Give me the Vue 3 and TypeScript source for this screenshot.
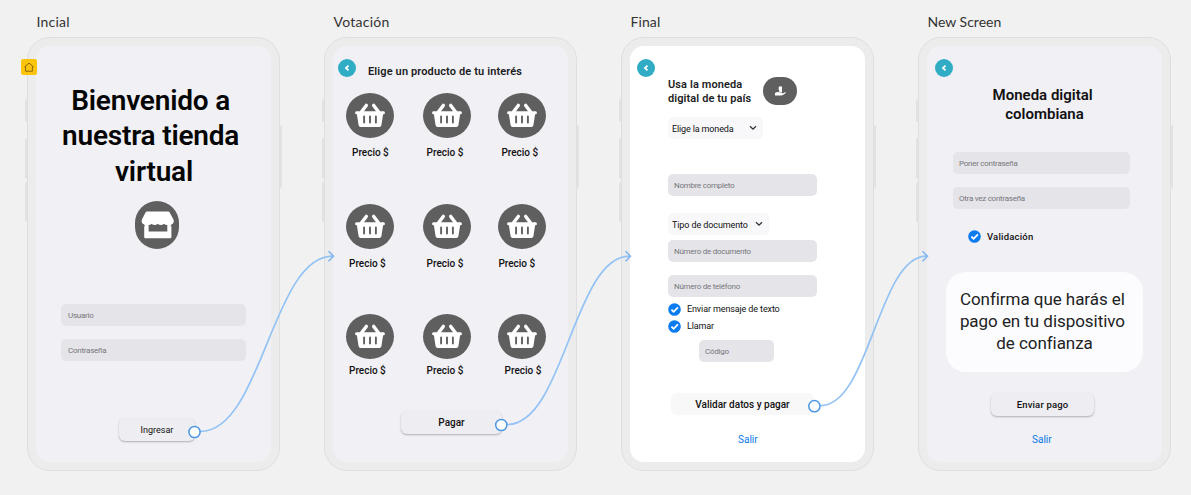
<script setup lang="ts">
interface Product {
  id: number
  shift: number
}
interface Wire {
  x: number
  y: number
  endX: number
}

const rows: Product[][] = [
  [{ id: 1, shift: 6 }, { id: 2, shift: 3.6 }, { id: 3, shift: 3.4 }],
  [{ id: 4, shift: 3 }, { id: 5, shift: 3.6 }, { id: 6, shift: 0.4 }],
  [{ id: 7, shift: 3 }, { id: 8, shift: 3.6 }, { id: 9, shift: 6.6 }],
]

const wires: Wire[] = [
  { x: 194.5, y: 432, endX: 333.5 },
  { x: 501.3, y: 425, endX: 630.5 },
  { x: 814.4, y: 406.2, endX: 927.5 },
]

function wirePath(w: Wire): string {
  const start = w.x + 6
  const d = (w.endX - start) * 0.46
  return `M${start} ${w.y - 0.5}C${start + d} ${w.y - 0.5} ${w.endX - d} 256.2 ${w.endX - 1} 256.2`
}
</script>

<template>
  <main class="canvas">
    <section class="frame">
      <div class="label l1">Incial</div>
      <div class="phone">
        <i class="key k1"></i><i class="key k2"></i><i class="key k3"></i><i class="key k4"></i>
        <span class="home">
          <svg width="16" height="16" viewBox="0 0 16 16"><path d="M3.4 8 8 4.1 12.6 8M4.6 7.4V12.2H11.4V7.4" fill="none" stroke="#7a5c08" stroke-width=".9" stroke-linejoin="round" /></svg>
        </span>
        <div class="screen s1">
          <h1>Bienvenido a&nbsp;<br />nuestra tienda&nbsp;<br />virtual</h1>
          <span class="shop">
            <svg width="44" height="48" viewBox="0 0 44 48">
              <path fill="#fff" d="M12 10.500h21.200q1 0 1.500.9L38.600 18.800q.8 3.800-2.200 4.700V36q0 1.200-1.200 1.200H10.400Q9.200 37.200 9.200 36V23.500q-3.200-.9-2.400-4.700L10.500 11.400q.5-.9 1.500-.9z" />
              <path fill="#5f5f60" d="M7 24.200h2.900v1H7zM35.700 24.200h2.900v1h-2.900zM13.600 23.900q2 0 3-1.200 1.200 1.200 3.100 1.200t3-1.200q1.200 1.200 3.100 1.200t3.100-1.200q1.200 1.200 3.400 1.200V30.400H13.600z" />
            </svg>
          </span>
          <div class="input user">Usuario</div>
          <div class="input pass">Contraseña</div>
          <div class="button enter">Ingresar</div>
        </div>
      </div>
    </section>

    <section class="frame">
      <div class="label l2">Votación</div>
      <div class="phone">
        <i class="key k1"></i><i class="key k2"></i><i class="key k3"></i><i class="key k4"></i>
        <div class="screen s2">
          <header>
            <span class="back"><svg width="18" height="18" viewBox="0 0 18 18"><path d="M10.500 6.700 8 9.100l2.500 2.300" /></svg></span>
            <h2>Elige un producto de tu interés</h2>
          </header>
          <div v-for="(row, i) in rows" :key="i" class="products" :class="'row' + i">
            <div v-for="p in row" :key="p.id" class="product">
              <span class="basket">
                <svg width="48" height="45" viewBox="0 0 48 45">
                  <path d="M15.700 18.500 20.300 12.400M32.300 18.500 27.700 12.400" stroke="#fff" stroke-width="3.400" stroke-linecap="round" />
                  <path fill="#fff" d="M10.300 18.300h27.400q1.200 0 1.200 1.500t-1.200 1.500h-.6l-1.700 11q-.4 1.600-2 1.600H14.600q-1.600 0-2-1.600l-1.700-11h-.6q-1.200 0-1.200-1.500t1.200-1.500z" />
                  <path d="M18.100 23.500v6M24 23.500v6M29.900 23.500v6" stroke="#5f5f60" stroke-width="1.900" stroke-linecap="round" />
                </svg>
              </span>
              <span class="price" :style="{ marginLeft: p.shift + 'px' }">Precio $</span>
            </div>
          </div>
          <div class="button pay">Pagar</div>
        </div>
      </div>
    </section>

    <section class="frame">
      <div class="label l3">Final</div>
      <div class="phone">
        <i class="key k1"></i><i class="key k2"></i><i class="key k3"></i><i class="key k4"></i>
        <div class="screen s3">
          <span class="back"><svg width="18" height="18" viewBox="0 0 18 18"><path d="M10.500 6.700 8 9.100l2.500 2.300" /></svg></span>
          <div class="intro">
            <h2>Usa la moneda<br />digital de tu país</h2>
            <span class="coin">
              <svg width="34" height="28" viewBox="0 0 34 28" fill="#fff">
                <path d="M15.700 9.800q1.600-1.300 3.300 0v5.400h-3.300l.9-1.200-.9-1.200z" />
                <path d="M12 16q2.200-1.300 4.200-.7l2.300.4q1.500.2.5 1l3.100-1.400q1.200-.2.600.8-1.700 1.900-4 2.400H12z" />
              </svg>
            </span>
          </div>
          <div class="select coin-select"><span>Elige la moneda</span><svg width="8" height="6" viewBox="0 0 8 6"><path d="M1 1.300 4 4.200 7 1.300" /></svg></div>
          <div class="input name">Nombre completo</div>
          <div class="select doc-select"><span>Tipo de documento</span><svg width="8" height="6" viewBox="0 0 8 6"><path d="M1 1.300 4 4.200 7 1.300" /></svg></div>
          <div class="input doc">Número de documento</div>
          <div class="input phone-no">Número de teléfono</div>
          <div class="check sms"><svg width="13" height="13" viewBox="0 0 13 13"><circle cx="6.500" cy="6.500" r="6.300" /><path d="m3.400 6.600 2.200 2.200 4.300-4.500" /></svg><span>Enviar mensaje de texto</span></div>
          <div class="check call"><svg width="13" height="13" viewBox="0 0 13 13"><circle cx="6.500" cy="6.500" r="6.300" /><path d="m3.400 6.600 2.200 2.200 4.300-4.500" /></svg><span>Llamar</span></div>
          <div class="input code">Código</div>
          <div class="button validate">Validar datos y pagar</div>
          <a class="exit">Salir</a>
        </div>
      </div>
    </section>

    <section class="frame">
      <div class="label l4">New Screen</div>
      <div class="phone">
        <i class="key k1"></i><i class="key k2"></i><i class="key k3"></i><i class="key k4"></i>
        <div class="screen s4">
          <span class="back"><svg width="18" height="18" viewBox="0 0 18 18"><path d="M10.500 6.700 8 9.100l2.500 2.300" /></svg></span>
          <h3>Moneda digital&nbsp;<br />colombiana</h3>
          <div class="input first">Poner contraseña</div>
          <div class="input again">Otra vez contraseña</div>
          <div class="check valid"><svg width="13" height="13" viewBox="0 0 13 13"><circle cx="6.500" cy="6.500" r="6.300" /><path d="m3.400 6.600 2.200 2.200 4.300-4.500" /></svg><span>Validación</span></div>
          <p class="notice">Confirma que harás el&nbsp;<br />pago en tu dispositivo&nbsp;<br />de confianza</p>
          <div class="button send">Enviar pago</div>
          <a class="exit">Salir</a>
        </div>
      </div>
    </section>

    <svg class="wires" width="1191" height="495" viewBox="0 0 1191 495" fill="none">
      <g v-for="w in wires" :key="w.x">
        <path :d="wirePath(w)" stroke="#93c3f5" stroke-width="1.700" />
        <path :d="`M${w.endX - 5} 251.200L${w.endX} 256.200L${w.endX - 5} 261.200`" stroke="#7db5ee" stroke-width="1.500" />
        <circle :cx="w.x" :cy="w.y" r="5.600" fill="#fff" stroke="#4b97e6" stroke-width="1.500" />
      </g>
    </svg>
  </main>
</template>

<style>
body {
  background: #f1f1f1;
}
</style>

<style scoped>
* {
  box-sizing: border-box;
}
.canvas {
  position: relative;
  display: flex;
  gap: 44px;
  width: 1191px;
  height: 495px;
  padding: 12px 0 0 27px;
  overflow: hidden;
  background: #f1f1f1;
  font-family: Roboto, "Liberation Sans", sans-serif;
  color: #111;
}
.frame {
  flex: 0 0 253px;
}
.label {
  height: 20px;
  margin-bottom: 5px;
  padding-left: 9.500px;
  font: 14px/20px Lato, sans-serif;
  color: #333;
  white-space: nowrap;
}
.l1 { letter-spacing: .2px; }
.l2 { letter-spacing: .25px; }
.l3 { letter-spacing: .1px; }
.phone {
  position: relative;
  height: 434px;
  padding: 8px;
  border: 1px solid #dfdfdf;
  border-radius: 23px;
  background: #ececec;
}
.key {
  position: absolute;
  left: -3px;
  width: 2px;
  background: #e2e2e2;
  border-radius: 2px 0 0 2px;
}
.k1 { top: 61px; height: 23px; }
.k2 { top: 100px; height: 41px; }
.k3 { top: 144px; height: 40px; }
.k4 { left: auto; right: -3px; top: 87px; height: 63px; }
.home {
  position: absolute;
  left: -7px;
  top: 21px;
  width: 16px;
  height: 16px;
  border-radius: 2px;
  background: #fcc40c;
}
svg {
  display: block;
}
.screen {
  display: flex;
  flex-direction: column;
  align-items: flex-start;
  height: 416px;
  border-radius: 14px;
  background: #f1f0f5;
  white-space: nowrap;
}
.s3 {
  background: #fff;
}
h1, h2, h3, p {
  margin: 0;
}
h1 {
  align-self: stretch;
  margin: 37px 0 0 1px;
  font-size: 28px;
  line-height: 35.400px;
  font-weight: 600;
  letter-spacing: -.2px;
  text-align: center;
  color: #050505;
}
.shop {
  width: 44px;
  height: 48px;
  margin: 12px 0 0 99px;
  border-radius: 22px;
  background: #5f5f60;
}
.input {
  flex: none;
  height: 22px;
  padding-left: 6px;
  border-radius: 5px;
  background: #e5e4e9;
  font-size: 8px;
  line-height: 23px;
  letter-spacing: -.26px;
  color: #77777b;
}
.user { width: 185px; margin: 55px 0 0 25px; padding-left: 7px; }
.pass { width: 185px; margin: 13px 0 0 25px; padding-left: 7px; }
.button {
  flex: none;
  height: 23px;
  border-radius: 6px;
  background: #eeedf1;
  box-shadow: 0 1px 2px rgba(0, 0, 0, .28);
  font-size: 10px;
  line-height: 23px;
  font-weight: 500;
  text-align: center;
}
.enter { width: 76px; margin: 57px 0 0 83px; font-size: 9px; font-weight: 400; line-height: 24px; }

header {
  display: flex;
}
.back {
  flex: none;
  width: 18px;
  height: 18px;
  border-radius: 50%;
  background: #30acc5;
}
.back path {
  fill: none;
  stroke: #fff;
  stroke-width: 1.800;
}
.s2 .back { margin: 13px 0 0 5px; }
.s3 .back { margin: 13px 0 0 7px; }
.s4 .back { margin: 13px 0 0 8px; }
h2 {
  font-size: 11px;
  line-height: 14px;
  font-weight: 600;
  letter-spacing: .13px;
  color: #1c1c1e;
}
.s2 h2 { margin: 19px 0 -1px 12px; }
.products {
  display: grid;
  grid-template-columns: 48px 48px 48px;
  column-gap: 29px;
  margin-left: 13px;
  height: 111px;
}
.product:nth-child(3) { margin-left: -2px; }
.row0 { margin-top: 15px; }
.row2 { height: 66px; margin-top: -1px; }
.product {
  display: flex;
  flex-direction: column;
  align-items: flex-start;
}
.basket {
  width: 48px;
  height: 45px;
  border-radius: 24px / 22.500px;
  background: #5f5f60;
}
.price {
  margin-top: 8px;
  font-size: 10px;
  line-height: 14px;
  font-weight: 500;
}
.row2 .price { margin-top: 5px; }
.pay { width: 101px; margin: 31px 0 0 68px; }

.intro {
  display: flex;
  height: 28px;
  margin-left: 38px;
}
.intro h2 { width: 95px; padding-top: 1px; letter-spacing: .1px; }
.coin {
  width: 34px;
  height: 28px;
  border-radius: 14px;
  background: #5f5f60;
}
.select {
  flex: none;
  display: flex;
  align-items: center;
  justify-content: space-between;
  height: 22px;
  margin-left: 38px;
  padding: 0 6px 0 4px;
  border-radius: 5px;
  background: #f8f8fa;
  font-size: 9px;
  letter-spacing: -.14px;
}
.select span { padding-top: 1px; }
.select path {
  fill: none;
  stroke: #333;
  stroke-width: 1.300;
}
.coin-select { width: 95px; margin-top: 12px; }
.doc-select { width: 101px; margin-top: 17px; }
.s3 .doc-select { letter-spacing: -.1px; }
.s3 .input { width: 149px; margin-left: 38px; }
.s3 .name { margin-top: 35px; }
.s3 .doc { margin-top: 5px; }
.s3 .phone-no { margin-top: 13px; }
.check {
  display: flex;
  align-items: center;
  gap: 6px;
  height: 13px;
  margin-left: 38px;
  font-size: 9px;
}
.check circle { fill: #0b7bf0; }
.check path {
  fill: none;
  stroke: #fff;
  stroke-width: 1.800;
}
.sms { margin-top: 6px; }
.call { margin-top: 4px; }
.sms span, .call span { margin-top: -2px; letter-spacing: -.12px; }
.s3 .code { width: 75px; margin: 7px 0 0 69px; }
.validate {
  width: 143px;
  height: 22px;
  margin: 31px 0 0 41px;
  background: #f8f8f9;
  box-shadow: none;
}
.exit {
  margin-top: 18px;
  font-size: 10px;
  line-height: 14px;
  color: #0b78ea;
}
.s3 .exit { margin-left: 108px; }

h3 {
  align-self: stretch;
  margin: 9px 0 0;
  font-size: 15px;
  line-height: 19px;
  font-weight: 600;
  text-align: center;
}
.s4 .input { width: 177px; margin-left: 26px; }
.s4 .first { margin-top: 28px; }
.s4 .again { margin-top: 13px; }
.valid { margin: 21px 0 0 41px; }
.valid span { font-size: 9.500px; font-weight: 500; letter-spacing: .2px; }
.notice {
  width: 197px;
  height: 100px;
  margin: 29px 0 0 19px;
  padding: 16px 0;
  border-radius: 20px;
  background: #fcfcfe;
  font-size: 17px;
  line-height: 22px;
  letter-spacing: -.05px;
  text-align: center;
  color: #222;
}
.send { width: 103px; margin: 21px 0 0 64px; font-size: 9.500px; letter-spacing: .15px; }
.s4 .exit { margin: 17px 0 0 105px; }
.wires {
  position: absolute;
  inset: 0;
}
</style>
